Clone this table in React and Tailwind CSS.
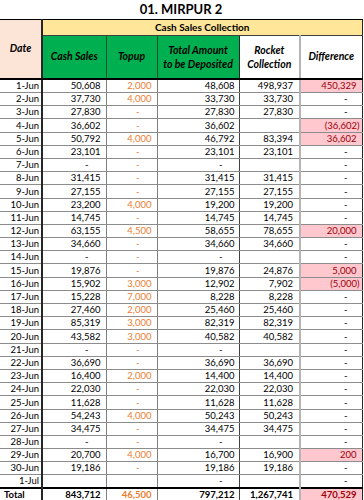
import React from "react";

const rows = [
  ["1-Jun", "50,608", "2,000", "48,608", "498,937", "450,329"],
  ["2-Jun", "37,730", "4,000", "33,730", "33,730", "-"],
  ["3-Jun", "27,830", "-", "27,830", "27,830", "-"],
  ["4-Jun", "36,602", "-", "36,602", "", "(36,602)"],
  ["5-Jun", "50,792", "4,000", "46,792", "83,394", "36,602"],
  ["6-Jun", "23,101", "-", "23,101", "23,101", "-"],
  ["7-Jun", "-", "-", "-", "", "-"],
  ["8-Jun", "31,415", "-", "31,415", "31,415", "-"],
  ["9-Jun", "27,155", "-", "27,155", "27,155", "-"],
  ["10-Jun", "23,200", "4,000", "19,200", "19,200", "-"],
  ["11-Jun", "14,745", "-", "14,745", "14,745", "-"],
  ["12-Jun", "63,155", "4,500", "58,655", "78,655", "20,000"],
  ["13-Jun", "34,660", "-", "34,660", "34,660", "-"],
  ["14-Jun", "-", "-", "-", "", "-"],
  ["15-Jun", "19,876", "-", "19,876", "24,876", "5,000"],
  ["16-Jun", "15,902", "3,000", "12,902", "7,902", "(5,000)"],
  ["17-Jun", "15,228", "7,000", "8,228", "8,228", "-"],
  ["18-Jun", "27,460", "2,000", "25,460", "25,460", "-"],
  ["19-Jun", "85,319", "3,000", "82,319", "82,319", "-"],
  ["20-Jun", "43,582", "3,000", "40,582", "40,582", "-"],
  ["21-Jun", "-", "-", "-", "", "-"],
  ["22-Jun", "36,690", "-", "36,690", "36,690", "-"],
  ["23-Jun", "16,400", "2,000", "14,400", "14,400", "-"],
  ["24-Jun", "22,030", "-", "22,030", "22,030", "-"],
  ["25-Jun", "11,628", "-", "11,628", "11,628", "-"],
  ["26-Jun", "54,243", "4,000", "50,243", "50,243", "-"],
  ["27-Jun", "34,475", "-", "34,475", "34,475", "-"],
  ["28-Jun", "-", "-", "-", "", "-"],
  ["29-Jun", "20,700", "4,000", "16,700", "16,900", "200"],
  ["30-Jun", "19,186", "-", "19,186", "19,186", "-"],
  ["1-Jul", "", "", "-", "", "-"],
];

const colBorder = [
  "border-r-2 border-r-[#262626]",
  "border-r border-r-[#7f7f7f]",
  "border-r border-r-[#7f7f7f]",
  "border-r border-r-[#404040]",
  "border-r-2 border-r-[#b4b4b4]",
  "border-r border-r-[#262626]",
];

const numPad = ["pr-[2px]", "pr-[5px]", "pr-[5px]", "pr-[4px]", "pr-[6px]", "pr-[5px]"];
const dashPad = ["pr-[2px]", "pr-[17px]", "pr-[17px]", "pr-[16px]", "pr-[18px]", "pr-[14px]"];

function DataCell({ v, col }) {
  const isDash = v === "-";
  const isNeg = v.startsWith("(");
  const pink = col === 5 && v !== "-" && v !== "";
  let pad = isDash ? dashPad[col] : numPad[col];
  if (isNeg) pad = "pr-[2px]";
  const color =
    col === 2 ? "text-[#ed7d31]" : pink ? "text-[#9c0006]" : "text-black";
  const bg = pink ? "bg-[#ffc7ce]" : "";
  return (
    <td
      className={`p-0 text-right align-bottom leading-[12px] border-b border-b-[#8c8c8c] ${colBorder[col]} ${pad} ${color} ${bg}`}
    >
      {v}
    </td>
  );
}

export default function App() {
  return (
    <div
      className="w-[364px] h-[500px] bg-white overflow-hidden"
      style={{ fontFamily: "Lato, 'Liberation Sans', sans-serif" }}
    >
      <table className="table-fixed border-collapse w-[362px] text-[9.5px]">
        <colgroup>
          <col className="w-[42px]" />
          <col className="w-[64px]" />
          <col className="w-[51px]" />
          <col className="w-[82px]" />
          <col className="w-[61px]" />
          <col className="w-[62px]" />
        </colgroup>
        <tbody>
          <tr className="h-[19px]">
            <td
              colSpan={6}
              className="p-0 text-center font-bold text-[13px] leading-[18px] border-b border-b-black text-black"
            >
              01. MIRPUR 2
            </td>
          </tr>
          <tr className="h-[16px]">
            <td
              rowSpan={2}
              className="p-0 text-center align-middle bg-[#fce4d6] font-bold italic text-[10.5px] border-r-2 border-r-[#262626] border-b-2 border-b-black"
            >
              Date
            </td>
            <td
              colSpan={5}
              className="p-0 text-center bg-[#ffe699] font-bold text-[10px] leading-[15px] border-b border-b-[#404040] border-r border-r-[#262626]"
            >
              Cash Sales Collection
            </td>
          </tr>
          <tr className="h-[44px]">
            <td className="p-0 text-center bg-[#00b050] font-bold italic text-[10.5px] border-r border-r-[#1a4d2e] border-b-2 border-b-black">
              Cash Sales
            </td>
            <td className="p-0 text-center bg-[#00b050] font-bold italic text-[10.5px] border-r border-r-[#1a4d2e] border-b-2 border-b-black">
              Topup
            </td>
            <td className="p-0 text-center bg-[#00b050] font-bold italic text-[10.5px] leading-[14px] border-r border-r-[#262626] border-b-2 border-b-black">
              Total Amount
              <br />
              to be Deposited
            </td>
            <td className="p-0 text-center bg-white font-bold italic text-[10.5px] leading-[14px] border-r-2 border-r-[#b4b4b4] border-b-2 border-b-black">
              Rocket
              <br />
              Collection
            </td>
            <td className="p-0 text-center bg-white font-bold italic text-[10.5px] border-r border-r-[#262626] border-b-2 border-b-black">
              Difference
            </td>
          </tr>
          {rows.map((r) => (
            <tr key={r[0]} className="h-[13.2px]">
              {r.map((v, i) => (
                <DataCell key={i} v={v} col={i} />
              ))}
            </tr>
          ))}
          <tr className="h-[13px] font-bold">
            <td className="p-0 pl-[4px] text-left leading-[12px] border-t-2 border-t-black border-b-2 border-b-black border-r-2 border-r-[#262626]">
              Total
            </td>
            <td className="p-0 pr-[5px] text-right leading-[12px] border-t-2 border-t-black border-b-2 border-b-black border-r border-r-[#7f7f7f]">
              843,712
            </td>
            <td className="p-0 pr-[5px] text-right leading-[12px] text-[#ed7d31] border-t-2 border-t-black border-b-2 border-b-black border-r border-r-[#7f7f7f]">
              46,500
            </td>
            <td className="p-0 pr-[4px] text-right leading-[12px] border-t-2 border-t-black border-b-2 border-b-black border-r border-r-[#404040]">
              797,212
            </td>
            <td className="p-0 pr-[6px] text-right leading-[12px] border-t-2 border-t-black border-b-2 border-b-black border-r-2 border-r-[#b4b4b4]">
              1,267,741
            </td>
            <td className="p-0 pr-[5px] text-right leading-[12px] bg-[#ffc7ce] text-[#9c0006] border-t-2 border-t-black border-b-2 border-b-black border-r border-r-[#262626]">
              470,529
            </td>
          </tr>
        </tbody>
      </table>
    </div>
  );
}
